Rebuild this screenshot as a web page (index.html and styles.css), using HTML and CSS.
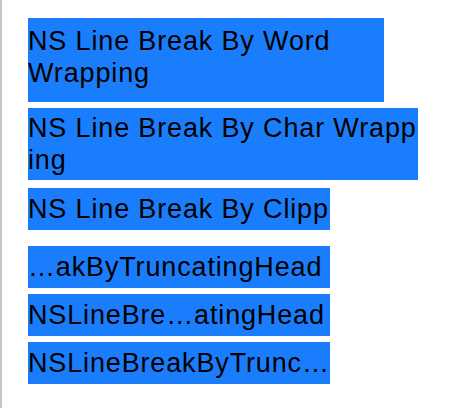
FILE: index.html
```html
<!DOCTYPE html>
<html lang="en">

<head>
    <meta charset="UTF-8">
    <meta name="viewport" content="width=device-width, initial-scale=1.0">
    <title>Line Break Modes</title>
    <link rel="stylesheet" href="styles.css">
</head>

<body>
    <div class="screen">
        <!-- 여러 줄 라벨 -->
        <div class="label word-wrap">NS Line Break By Word Wrapping</div>
        <div class="label char-wrap">NS Line Break By Char Wrapp<br>ing</div>

        <!-- 한 줄 라벨 -->
        <div class="label single clip">NS Line Break By Clipp</div>
        <div class="label single head">…akByTruncatingHead</div>
        <div class="label single">NSLineBre…atingHead</div>
        <div class="label single">NSLineBreakByTrunc…</div>
    </div>
</body>

</html>
```

FILE: styles.css
```css
body {
    margin: 0;
    padding: 0;
    background-color: #fff;
}

.screen {
    height: 408px;
    box-sizing: border-box;
    border-left: 2px solid #c6c6c6;
    padding: 18px 0 0 26px;
    display: flex;
    flex-flow: column nowrap;
    align-items: flex-start;
}

.label {
    box-sizing: border-box;
    background-color: #1a7dfc;
    color: #000;
    font-family: "Liberation Sans", Arial, sans-serif;
    font-size: 27px;
    letter-spacing: 0.85px;
    line-height: 32px;
    margin-bottom: 6px;
}

.word-wrap {
    width: 356px;
    height: 84px;
    padding-top: 7px;
}

.char-wrap {
    width: 390px;
    height: 72px;
    padding-top: 4px;
    margin-bottom: 8px;
}

.single {
    width: 302px;
    height: 42px;
    line-height: 42px;
    white-space: nowrap;
    overflow: hidden;
}

.clip {
    margin-bottom: 16px;
}
```
